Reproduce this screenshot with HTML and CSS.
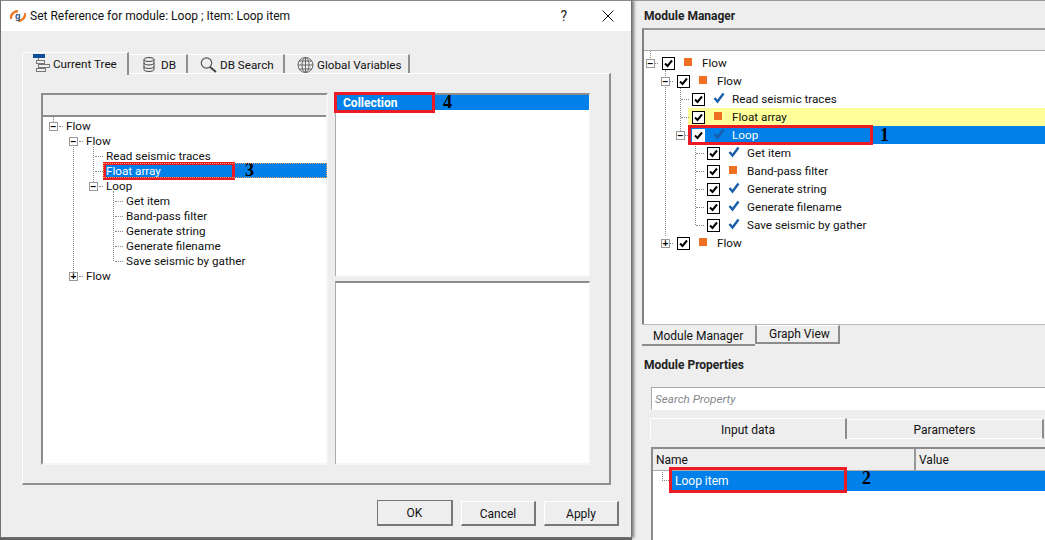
FILE: index.html
```html
<!doctype html>
<html lang="en">
<head>
  <meta charset="utf-8" />
  <title>Set Reference</title>
  <link rel="stylesheet" href="styles.css">
</head>
<body>
<svg class="defs" width="0" height="0">
  <symbol id="tick" viewBox="0 0 12 12"><path d="M1.5 6 4.5 9.5 10.5 1.5" fill="none" stroke-width="2.4"/></symbol>
  <symbol id="box" viewBox="0 0 13 13"><rect x=".5" y=".5" width="12" height="12" fill="#fff" stroke="#000"/><path d="M3 6.5 5.5 9 10 3.5" fill="none" stroke="#000" stroke-width="2"/></symbol>
</svg>

<div class="desk">
  <!-- dialog -->
  <div class="dialog">
    <div class="titlebar">
      <svg class="applogo" width="16" height="12" viewBox="0 0 16 12"><path d="M.5 9C1 4 3.500 1.500 8 1" fill="none" stroke="#ee7a2e" stroke-width="2.500"/><path d="M15.500 3C15 8 12.500 10.500 8 11" fill="none" stroke="#ee7a2e" stroke-width="2.500"/><text x="5" y="9" class="g">g</text></svg>
      <span class="title">Set Reference for module: Loop ; Item: Loop item</span>
      <span class="help">?</span>
      <svg class="close" width="12" height="12" viewBox="0 0 12 12"><path d="M.5.5 11.5 11.5M11.5.5.5 11.5" stroke="#111" fill="none"/></svg>
    </div>
    <div class="dlgbody">
      <div class="tabs">
        <div class="tab t1 on">
          <svg width="17" height="19" viewBox="0 0 17 19"><rect x="0" y="0" width="12" height="4" fill="#0d4f94"/><g fill="none" stroke="#777"><path d="M5.500 4v2"/><rect x="3.500" y="6.500" width="8" height="3"/><rect x="5.500" y="10.500" width="11" height="3"/><rect x="3.500" y="14.500" width="9" height="3"/></g></svg>
          Current Tree
        </div>
        <div class="tab t2">
          <svg width="12" height="15" viewBox="0 0 12 15"><g fill="none" stroke="#444"><ellipse cx="6" cy="2.500" rx="5" ry="2"/><path d="M1 2.500v10c0 2.600 10 2.600 10 0v-10M1 6c0 2.600 10 2.600 10 0M1 9.500c0 2.600 10 2.600 10 0"/></g></svg>
          DB
        </div>
        <div class="tab t3">
          <svg width="17" height="16" viewBox="0 0 17 16"><circle cx="6.500" cy="6" r="5.200" fill="none" stroke="#555" stroke-width="1.200"/><path d="M10 10l6 5" stroke="#444" stroke-width="2"/></svg>
          DB Search
        </div>
        <div class="tab t4">
          <svg width="17" height="16" viewBox="0 0 17 16"><g fill="none" stroke="#666"><circle cx="8.500" cy="8" r="7.500"/><ellipse cx="8.500" cy="8" rx="3.500" ry="7.500"/><path d="M1 8h15M2 4h13M2 12h13M8.500 .5v15"/></g></svg>
          Global Variables
        </div>
      </div>
      <div class="tabpane">
        <div class="treebox">
          <div class="treehead"></div>
          <div class="tree">
            <b class="vl a0"></b><b class="vl a1"></b><b class="vl a2"></b><b class="vl a3"></b>
            <div class="trow"><i class="exp l0">−</i><span class="lbl">Flow</span></div>
            <div class="trow"><i class="exp l1">−</i><span class="lbl">Flow</span></div>
            <div class="trow in3"><b class="dots"></b><span class="lbl">Read seismic traces</span></div>
            <div class="trow in3"><b class="dots"></b><div class="selbar"><span class="sellbl">Float array</span><span class="mark m3">3</span></div></div>
            <div class="trow"><i class="exp l2">−</i><span class="lbl">Loop</span></div>
            <div class="trow in4"><b class="dots"></b><span class="lbl">Get item</span></div>
            <div class="trow in4"><b class="dots"></b><span class="lbl">Band-pass filter</span></div>
            <div class="trow in4"><b class="dots"></b><span class="lbl">Generate string</span></div>
            <div class="trow in4"><b class="dots"></b><span class="lbl">Generate filename</span></div>
            <div class="trow in4"><b class="dots"></b><span class="lbl">Save seismic by gather</span></div>
            <div class="trow"><i class="exp l1">+</i><span class="lbl">Flow</span></div>
          </div>
        </div>
        <div class="sidecol">
          <div class="listbox top">
            <div class="coll"><span class="colltext">Collection</span><span class="mark m4">4</span></div>
          </div>
          <div class="listbox bottom"></div>
        </div>
      </div>
      <div class="btnrow">
        <button class="btn dflt">OK</button>
        <button class="btn">Cancel</button>
        <button class="btn">Apply</button>
      </div>
    </div>
  </div>

  <!-- module manager side -->
  <div class="side">
    <div class="heading">Module Manager</div>
    <div class="mgr">
      <div class="treehead"></div>
      <div class="mtree">
        <b class="vl b0"></b><b class="vl b1"></b><b class="vl b2"></b><b class="vl b3"></b>
        <div class="mrow d0"><i class="exp">−</i><svg class="cb"><use href="#box"/></svg><em class="sq"></em><span>Flow</span></div>
        <div class="mrow d1"><i class="exp">−</i><svg class="cb"><use href="#box"/></svg><em class="sq"></em><span>Flow</span></div>
        <div class="mrow d2"><b class="dots"></b><svg class="cb"><use href="#box"/></svg><svg class="ck"><use href="#tick"/></svg><span>Read seismic traces</span></div>
        <div class="mrow d2 yellow"><b class="dots"></b><svg class="cb"><use href="#box"/></svg><em class="sq"></em><span>Float array</span></div>
        <div class="mrow d2 blue"><i class="exp">−</i><svg class="cb"><use href="#box"/></svg><svg class="ck"><use href="#tick"/></svg><span>Loop</span><span class="mark m1">1</span></div>
        <div class="mrow d3"><b class="dots"></b><svg class="cb"><use href="#box"/></svg><svg class="ck"><use href="#tick"/></svg><span>Get item</span></div>
        <div class="mrow d3"><b class="dots"></b><svg class="cb"><use href="#box"/></svg><em class="sq"></em><span>Band-pass filter</span></div>
        <div class="mrow d3"><b class="dots"></b><svg class="cb"><use href="#box"/></svg><svg class="ck"><use href="#tick"/></svg><span>Generate string</span></div>
        <div class="mrow d3"><b class="dots"></b><svg class="cb"><use href="#box"/></svg><svg class="ck"><use href="#tick"/></svg><span>Generate filename</span></div>
        <div class="mrow d3"><b class="dots"></b><svg class="cb"><use href="#box"/></svg><svg class="ck"><use href="#tick"/></svg><span>Save seismic by gather</span></div>
        <div class="mrow d1"><i class="exp">+</i><svg class="cb"><use href="#box"/></svg><em class="sq"></em><span>Flow</span></div>
      </div>
    </div>
    <div class="btabs">
      <div class="btab on">Module Manager</div>
      <div class="btab">Graph View</div>
    </div>
    <div class="heading props">Module Properties</div>
    <div class="search">Search Property</div>
    <div class="ptabs">
      <div class="ptab on">Input data</div>
      <div class="ptab">Parameters</div>
    </div>
    <div class="ptable">
      <div class="phead"><div class="pname">Name</div><div class="pval">Value</div></div>
      <div class="prow"><b class="elbow"></b><span class="ptext">Loop item</span><span class="mark m2">2</span></div>
    </div>
  </div>
</div>
</body>
</html>
```

FILE: styles.css
```css
:root{
  --bg:#eeeeee; --sel:#0080e8; --red:#ed1c24; --edge:#8c8c8c;
}
html,body{margin:0;height:540px;overflow:hidden}
body{font-family:Roboto,"Noto Sans",sans-serif;font-size:11.7px;color:#111;background:#5c5c5c}
.defs{display:block;height:0}

.desk{display:flex;width:1045px;height:540px;overflow:hidden}

/* dialog */
.dialog{width:632px;height:538px;flex:none;box-sizing:border-box;background:var(--bg);border:1px solid #707070;border-top-color:#8a8a8a;box-shadow:2px 0 3px #777;position:relative;z-index:2;display:flex;flex-direction:column}
.titlebar{height:30px;background:#fff;display:flex;align-items:center;padding-left:9px;flex:none}
.applogo{margin-right:4px;flex:none}
.g{font:bold 9px "Liberation Sans",sans-serif;fill:#1f4f86}
.title{font-size:12px;flex:1;white-space:nowrap}
.help{font-size:14px;margin-right:35px;color:#222}
.close{margin-right:17px}
.dlgbody{flex:1;padding:21px 11px 0 21px;display:flex;flex-direction:column;min-height:0}

.tabs{display:flex;height:22px;flex:none}
.tab{display:flex;align-items:center;box-sizing:border-box;height:20px;margin-top:2px;padding-top:1px;border-right:2px solid #909090;border-top:1px solid #fff;white-space:nowrap;border-bottom:1px solid #fff}
.tab svg{flex:none}
.t1{width:107px;padding-left:10px;gap:3px}
.t2{width:59px;padding-left:14px;gap:6px}
.t3{width:97px;padding-left:12px;gap:3px}
.t4{width:125px;padding-left:12px;gap:3px}
.tab.on{height:23px;margin-top:0;padding-top:0;border-left:1px solid #fff;border-bottom:0;background:var(--bg);position:relative;z-index:1;border-top-left-radius:2px;padding-bottom:1px}
.tabpane{width:589px;height:412px;flex:none;box-sizing:border-box;border:2px solid #909090;border-top:1px solid #fff;border-left:1px solid #fff;padding:19px 0 0 18px;margin-top:-1px;display:flex;gap:7px;align-items:flex-start}

.treebox{width:287px;height:372px;flex:none;box-sizing:border-box;background:#fff;border:2px solid var(--edge);border-right-color:#f6f6f6;border-bottom-color:#f6f6f6;display:flex;flex-direction:column}
.treehead{height:22px;background:var(--bg);border-bottom:2px solid var(--edge);flex:none;box-sizing:border-box}
.tree{padding-top:2px;position:relative;flex:1}
.trow{height:15px;display:flex;align-items:center;line-height:15px}
.lbl{white-space:nowrap}
.exp{width:7px;height:7px;border:1px solid #999;background:#fff;font-style:normal;font-size:10px;line-height:7px;text-align:center;font-weight:bold;flex:none;margin-right:8px;color:#000;font-family:"Liberation Sans",sans-serif;position:relative}
.exp::after{content:"";position:absolute;left:100%;top:3px;width:4px;margin-left:2px;border-top:1px dotted #888}
.exp.l0{margin-left:6px}
.exp.l1{margin-left:26px}
.exp.l2{margin-left:46px}
.dots{display:block;width:8px;height:0;border-top:1px dotted #888;flex:none;margin-right:3px}
.in3 .dots{margin-left:52px}
.in4 .dots{margin-left:72px}

/* dotted tree lines */
.vl{position:absolute;width:0;border-left:1px dotted #888}
.a0{left:10px;top:0;height:5px}
.a1{left:30px;top:30px;height:125px}
.a2{left:50px;top:30px;height:35px}
.a3{left:70px;top:74px;height:70px}
.b0{left:6px;top:0;height:7px}
.b1{left:21px;top:19px;height:166px}
.b2{left:36px;top:37px;height:43px}
.b3{left:51px;top:92px;height:82px}

.selbar{flex:1;align-self:flex-start;height:15px;margin:-1px -1px 0 -3px;background:var(--sel);display:flex;align-items:flex-start;outline:1px dotted #e9a25c;outline-offset:-1px}
.sellbl{color:#fff;width:132px;height:18px;line-height:12px;box-sizing:border-box;border:3px solid var(--red);margin-top:-1px;flex:none;white-space:nowrap}

.mark{font:bold 18px/15px "Liberation Serif",serif;color:#000;flex:none}
.m3{margin-left:10px;line-height:14px}
.m4{margin-left:8px}
.m1{position:absolute;left:236px;top:0;line-height:18px}
.m2{margin-left:15px}

.sidecol{width:255px;flex:none;display:flex;flex-direction:column;gap:4px}
.listbox{background:#fff;box-sizing:border-box;border-top:2px solid var(--edge);border-left:1px solid #aaa;border-right:1px solid #f6f6f6;border-bottom:2px solid #f6f6f6}
.listbox.top{height:184px}
.listbox.bottom{height:184px}
.coll{height:15px;background:var(--sel);display:flex;align-items:flex-start}
.colltext{color:#fff;font-weight:bold;width:101px;height:21px;line-height:16px;box-sizing:border-box;padding-left:6px;margin:-3px 0 0 -2px;border:3px solid var(--red);flex:none;font-size:12px}

.btnrow{display:flex;gap:8px;justify-content:flex-end;margin-top:15px;width:597px}
.btn{width:75px;height:25px;margin-top:1px;background:var(--bg);border:1px solid #777;border-top-color:#fff;border-left-color:#fff;border-right-width:2px;border-bottom-width:2px;font:12px Roboto,sans-serif;color:#111;padding:1px 0 0}
.btn.dflt{width:76px;height:26px;margin-top:0;border-top-color:#777;border-left-color:#777}

/* right side */
.side{flex:1;min-width:0;box-sizing:border-box;padding:0 0 0 10px;border-top:1px solid #999;background:var(--bg);height:540px}
.heading{font-weight:bold;height:27px;line-height:31px;padding-left:2px;white-space:nowrap;font-size:12px;color:#222}
.mgr{height:296px;border-left:2px solid #808080;border-top:2px solid #999;background:#fff;box-sizing:border-box;display:flex;flex-direction:column}
.mgr .treehead{height:21px;border-bottom:1px solid #aaa}
.mtree{padding-top:3px;position:relative;flex:1}
.mrow{height:18px;display:flex;align-items:center;position:relative;white-space:nowrap}
.mrow .exp{margin-right:7px}
.mrow .exp::after{margin-left:1px;width:3px}
.d0 .exp{margin-left:2px}
.d1 .exp{margin-left:17px}
.d2 .exp{margin-left:32px}
.d2 .dots{margin-left:37px}
.d3 .dots{margin-left:52px}
.cb{width:13px;height:13px;flex:none;margin-right:9px}
.ck{width:12px;height:12px;flex:none;margin:-2px 7px 0 -1px;stroke:#1a5da8}
.sq{display:block;width:8px;height:8px;background:#ee6f22;flex:none;margin:-3px 10px 0 0}
.yellow{background:linear-gradient(90deg,transparent 44px,#ffff99 44px)}
.blue{background:linear-gradient(90deg,transparent 44px,var(--sel) 44px);color:#fff}
.blue::after{content:"";position:absolute;left:44px;top:-1px;width:185px;height:20px;box-sizing:border-box;border:3px solid var(--red)}
.blue .cb{outline:1px solid #fff;outline-offset:-1px}

.btabs{display:flex;height:22px;align-items:flex-start;border-top:1px solid #bbb;box-sizing:border-box}
.btab{height:19px;line-height:17px;padding:0 8px 0 12px;box-sizing:border-box;background:var(--bg);border-right:2px solid var(--edge);border-bottom:2px solid var(--edge);border-left:2px solid var(--edge);border-top:1px solid #fff;white-space:nowrap;font-size:12px}
.btab.on{width:113px;height:21px;line-height:23px;padding:0 0 0 11px;border-left:0;border-top:0;border-right:0}
.props{margin-top:6px;height:26px;line-height:27px}
.search{height:23px;line-height:22px;margin:9px 0 0 9px;box-sizing:border-box;background:#fff;border:1px solid #aaa;border-right:0;border-bottom-color:#fff;font-style:italic;color:#888;padding-left:3px}
.ptabs{display:flex;height:21px;margin:8px 0 0 8px;align-items:flex-start}
.ptab{width:197px;height:20px;margin-top:1px;flex:none;text-align:center;line-height:21px;border-right:2px solid var(--edge);border-top:1px solid #fff;border-bottom:1px solid #fff;box-sizing:border-box;font-size:12px}
.ptab.on{margin-top:0;height:21px;border-bottom:0;border-left:1px solid #fff;line-height:22px}
.ptable{height:93px;margin:8px 0 0 9px;background:#fff;border-left:2px solid var(--edge);border-top:2px solid var(--edge);box-sizing:border-box}
.phead{display:flex;height:22px;background:var(--bg);border-bottom:1px solid #aaa;line-height:23px;box-sizing:border-box;font-size:12px}
.pname{width:263px;padding-left:3px;box-sizing:border-box;border-right:2px solid #999}
.pval{padding-left:3px}
.prow{height:20px;margin:0 0 0 18px;background:var(--sel);display:flex;align-items:flex-start;position:relative}
.elbow{position:absolute;left:-9px;top:1px;width:6px;height:8px;border-left:1px dotted #888;border-bottom:1px dotted #888}
.ptext{color:#fff;width:178px;height:26px;line-height:22px;box-sizing:border-box;border:3px solid var(--red);padding-left:3px;flex:none;margin:-4px 0 -2px -2px;font-size:12px}
```
